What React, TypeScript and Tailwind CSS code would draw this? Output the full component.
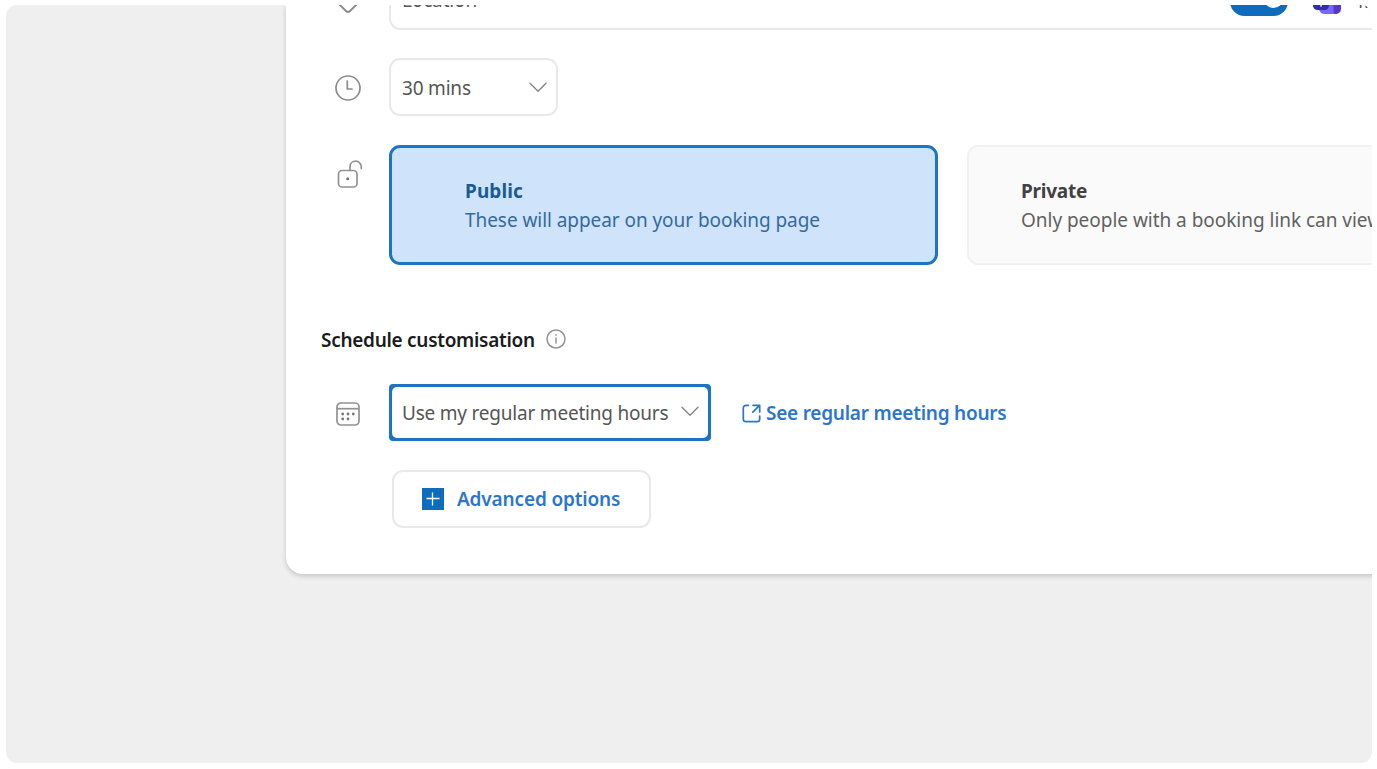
import type { ReactNode } from 'react';

function Chevron({ className = '' }: { className?: string }) {
  return (
    <svg className={`h-[11px] w-[18px] shrink-0 ${className}`} viewBox="0 0 18 11" fill="none" stroke="#858585" strokeWidth="1.4" strokeLinecap="round" strokeLinejoin="round">
      <path d="M1 1.2 9 9.2l8-8" />
    </svg>
  );
}

function IconCell({ children }: { children: ReactNode }) {
  return <div className="flex w-[55px] shrink-0 justify-center">{children}</div>;
}

function PinIcon() {
  return (
    <svg className="mb-[17px] h-[28px] w-[28px]" viewBox="0 0 28 28" fill="none" stroke="#8c8c8c" strokeWidth="1.9">
      <path d="M14 27c-.7 0-1.300-.3-2-1L5.500 19.500a12 12 0 1 1 17 0L16 26c-.7.7-1.300 1-2 1Z" />
      <circle cx="14" cy="11" r="3.5" />
    </svg>
  );
}

function ClockIcon() {
  return (
    <svg className="mt-[2px] h-[26px] w-[26px]" viewBox="0 0 26 26" fill="none" stroke="#8c8c8c" strokeWidth="1.7" strokeLinecap="round" strokeLinejoin="round">
      <circle cx="13" cy="13" r="12" />
      <path d="M12.300 6v8h4.700" />
    </svg>
  );
}

function UnlockIcon() {
  return (
    <svg className="ml-[4px] h-[29px] w-[26px]" viewBox="0 0 26 29" fill="none" stroke="#929292" strokeWidth="1.7" strokeLinecap="round">
      <rect x="1.500" y="10.500" width="18.500" height="16.500" rx="3.500" />
      <path d="M13 10.500V6.500C13 3.400 15.600 1.200 18.700 1.200c3.100 0 5.600 2.400 5.600 5.600v1.700" />
      <circle cx="10.700" cy="18.800" r="1.500" fill="#707070" stroke="none" />
    </svg>
  );
}

function CalendarIcon() {
  return (
    <svg className="mt-[3px] h-[24px] w-[24px]" viewBox="0 0 24 24" fill="none" stroke="#929292" strokeWidth="1.700">
      <rect x="1" y="1" width="22" height="22" rx="4" />
      <path d="M1 6.700h22" />
      <g fill="#777" stroke="none">
        <circle cx="6.700" cy="12" r="1.400" />
        <circle cx="12" cy="12" r="1.400" />
        <circle cx="17.300" cy="12" r="1.400" />
        <circle cx="6.700" cy="17" r="1.400" />
        <circle cx="12" cy="17" r="1.400" />
      </g>
    </svg>
  );
}

function InfoIcon() {
  return (
    <svg className="-mt-[2px] h-5 w-5" viewBox="0 0 20 20" fill="none" stroke="#929292" strokeWidth="1.500">
      <circle cx="10" cy="10" r="9" />
      <path d="M10 8.600v6M10 5.300v1.500" />
    </svg>
  );
}

function OpenIcon() {
  return (
    <svg className="h-[19px] w-[19px]" viewBox="0 0 19 19" fill="none" stroke="#2b76cc" strokeWidth="1.700" strokeLinecap="round" strokeLinejoin="round">
      <path d="M6.500 1.300H4A2.700 2.700 0 0 0 1.300 4v11A2.700 2.700 0 0 0 4 17.700h11a2.700 2.700 0 0 0 2.700-2.700v-3M11 1.300h6.700V8M17.300 1.700l-6.500 6.500" />
    </svg>
  );
}

function TeamsIcon() {
  return (
    <svg className="mb-[15px] h-[28px] w-[28px]" viewBox="0 0 28 28">
      <circle cx="22" cy="5" r="4" fill="#5b4cdb" />
      <circle cx="13" cy="4" r="4.500" fill="#7b83eb" />
      <path d="M6 10h18v17H12a6 6 0 0 1-6-5Z" fill="#7468ff" />
      <path d="M20.500 10H28v12a5 5 0 0 1-5 5 2.500 2.500 0 0 1-2.500-2.500Z" fill="#5936cf" />
      <rect x="0" y="7" width="16" height="16" rx="4.500" fill="#342cae" />
      <path d="M5 11h6M8 11v8.800" stroke="#b9b4f0" strokeWidth="2" />
    </svg>
  );
}

export default function App() {
  return (
    <div className="h-[769px] w-full overflow-hidden bg-white pt-[5px] pl-[6px] font-['Noto_Sans',sans-serif] text-[19px] leading-[29px] text-[#555555]">
      <div className="h-[758px] w-[1366px] overflow-hidden rounded-[11px] bg-[#efefef] pl-[280px]">
        <main className="flex h-[569px] w-[1240px] flex-col rounded-b-[17px] bg-white pl-[34px] shadow-[0_2px_5px_rgba(0,0,0,0.18)]">
          <div className="flex h-[25px] shrink-0 items-end">
            <IconCell><PinIcon /></IconCell>
            <div className="ml-[14px] flex h-[58px] w-[1100px] shrink-0 items-end rounded-[11px] border-2 border-[#e9e9e9] pl-[11px]">
              <span className="mb-[13px] w-[828px] shrink-0 tracking-[-0.15px]">Location</span>
              <div className="mb-[12px] flex h-[29px] w-[58px] shrink-0 items-start justify-end rounded-full bg-[#0f6cbd] pt-[2px] pr-[5px]">
                <span className="h-[19px] w-[19px] rounded-full bg-white" />
              </div>
              <div className="-mb-[2px] ml-[25px] shrink-0"><TeamsIcon /></div>
              <span className="mb-[12px] ml-[17px] whitespace-nowrap">Microsoft Teams</span>
            </div>
          </div>

          <div className="mt-[28px] flex h-[58px] shrink-0 items-center">
            <IconCell><ClockIcon /></IconCell>
            <button className="ml-[14px] flex h-[58px] w-[169px] items-center justify-between rounded-[11px] border-2 border-[#e9e9e9] pr-[9px] pl-[11px]">
              <span className="mt-[2px] tracking-[-0.2px]">30 mins</span>
              <Chevron />
            </button>
          </div>

          <div className="mt-[29px] flex h-[120px] shrink-0">
            <div className="pt-[15px]"><IconCell><UnlockIcon /></IconCell></div>
            <div className="ml-[14px] flex w-[549px] shrink-0 flex-col justify-center rounded-[11px] border-[3px] border-[#1b74c4] bg-[#cfe4fa] pt-[2px] pl-[73px] text-[#36699f]">
              <strong className="font-bold tracking-[0.1px] text-[#1b5a96]">Public</strong>
              <span className="whitespace-nowrap tracking-[-0.06px]">These will appear on your booking page</span>
            </div>
            <div className="ml-[29px] flex w-[549px] shrink-0 flex-col justify-center rounded-[11px] border-2 border-[#f1f1f1] bg-[#fafafa] pt-[2px] pl-[52px]">
              <strong className="font-bold tracking-[-0.25px] text-[#424242]">Private</strong>
              <span className="whitespace-nowrap tracking-[-0.03px] text-[#616161]">Only people with a booking link can view</span>
            </div>
          </div>

          <div className="mt-[60px] flex h-[30px] shrink-0 items-center gap-[11px]">
            <h2 className="pl-px font-semibold tracking-[-0.29px] text-[#1b1b1b]">Schedule customisation</h2>
            <InfoIcon />
          </div>

          <div className="mt-[29px] flex h-[57px] shrink-0 items-center">
            <IconCell><CalendarIcon /></IconCell>
            <button className="ml-[14px] flex h-[57px] w-[322px] shrink-0 items-center justify-between rounded-[4px] border-[3px] border-[#1b74c4] bg-[#1b74c4]">
              <span className="flex h-[51px] w-[316px] items-center justify-between rounded-[5px] bg-white pt-[2px] pr-[9px] pl-[10px]">
                <span className="whitespace-nowrap tracking-[-0.21px]">Use my regular meeting hours</span>
                <Chevron className="-mt-[4px]" />
              </span>
            </button>
            <a className="mt-[2px] ml-[31px] flex items-center gap-[5px] font-semibold text-[#2b76cc]">
              <OpenIcon />
              <span className="whitespace-nowrap tracking-[-0.24px]">See regular meeting hours</span>
            </a>
          </div>

          <button className="mt-[29px] ml-[72px] flex h-[58px] w-[259px] shrink-0 items-center gap-[13px] rounded-[11px] border-2 border-[#e9e9e9] pl-[28px] font-semibold text-[#2b76cc]">
            <svg className="-mt-px h-[22px] w-[22px]" viewBox="0 0 22 22">
              <path fill="#0f6cbd" d="M0 0h22v22H0z" />
              <path d="M4.500 10.500h13M10.500 4.500v13" stroke="#fff" strokeWidth="1.300" />
            </svg>
            <span className="whitespace-nowrap tracking-[-0.15px]">Advanced options</span>
          </button>
        </main>
      </div>
    </div>
  );
}
